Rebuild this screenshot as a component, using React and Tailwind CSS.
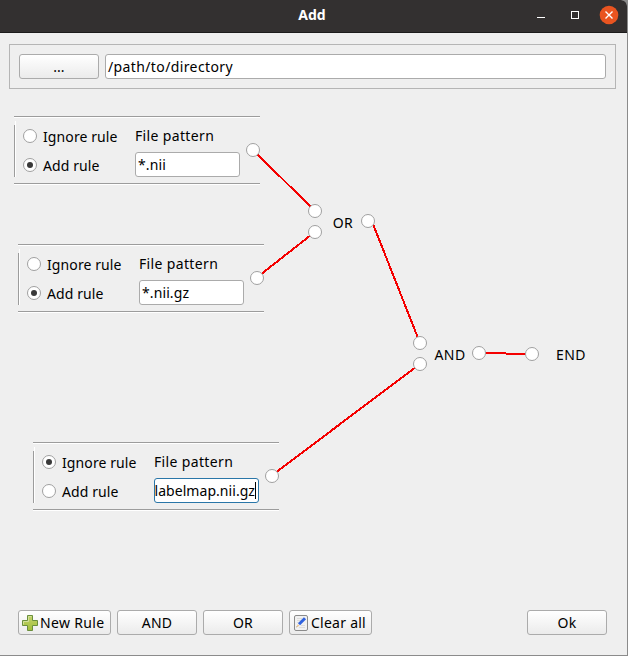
import React from "react";

const CANVAS_TOP = 100;

function Button({ className = "", children }) {
  return (
    <button
      className={`flex h-[25px] items-center rounded-[3px] border border-[#ababab] bg-linear-to-b from-white to-[#ebebeb] whitespace-nowrap ${className}`}
    >
      {children}
    </button>
  );
}

function Radio({ checked, label }) {
  return (
    <div className="flex h-[29px] shrink-0 items-center">
      <span className="flex size-[14px] items-center justify-center rounded-full border border-[#a0a0a0] bg-white">
        {checked && <span className="size-[6px] rounded-full bg-[#3a3a3a]" />}
      </span>
      <span className="ml-[6px] whitespace-nowrap pt-px tracking-[0.1px]">{label}</span>
    </div>
  );
}

function Rule({ x, y, ignore, pattern, focused }) {
  return (
    <div
      className="absolute flex h-[69px] w-[246px] flex-col"
      style={{ left: x, top: y - CANVAS_TOP }}
    >
      <div className="h-[2px] shrink-0 border-t border-[#9c9c9c] bg-white" />
      <div className="mt-[7px] flex h-[52px] shrink-0 border-l border-[#9c9c9c]">
        <div className="-mt-[4px] flex w-[120px] flex-col border-l border-white pl-[7px]">
          <Radio checked={ignore} label="Ignore rule" />
          <Radio checked={!ignore} label="Add rule" />
        </div>
        <div className="flex w-[105px] flex-col">
          <div className="h-[27px] whitespace-nowrap leading-[21px] tracking-[0.35px]">File pattern</div>
          <div
            className={`flex h-[25px] shrink-0 items-center rounded-[3px] border bg-white whitespace-nowrap ${
              focused ? "justify-end border-[#2a76a8] pr-[2px] tracking-[0.05px]" : "border-[#ababab] pl-[2px] tracking-[0.1px]"
            }`}
          >
            {pattern}
            {focused && <span className="h-[17px] w-px shrink-0 bg-black" />}
          </div>
        </div>
      </div>
      <div className="mt-[6px] h-[2px] shrink-0 border-t border-[#9c9c9c] bg-white" />
    </div>
  );
}

function Label({ x, y, children }) {
  return (
    <span
      className="absolute -translate-x-1/2 leading-[20px] tracking-[0.4px]"
      style={{ left: x, top: y - CANVAS_TOP }}
    >
      {children}
    </span>
  );
}

const wires = [
  [257, 154, 312, 208],
  [260, 275, 311, 235],
  [373, 224, 418, 338],
  [275, 473, 416, 367],
];

const ports = [
  [253, 150], [257, 278], [272, 476],
  [315, 211], [315, 232], [368, 221],
  [420, 343], [420, 364], [479, 353], [532, 354],
];

function Wires() {
  return (
    <svg className="absolute inset-0" width="627" height="500" viewBox="0 100 627 500">
      <g stroke="#f40000" strokeWidth="2" fill="none" shapeRendering="crispEdges">
        {wires.map(([x1, y1, x2, y2]) => (
          <line key={x1} x1={x1} y1={y1} x2={x2} y2={y2} />
        ))}
        <path d="M485 353H506M506 354H526" />
      </g>
      {ports.map(([x, y]) => (
        <circle key={`${x}-${y}`} cx={x} cy={y} r="6.5" fill="white" stroke="#a0a0a0" />
      ))}
    </svg>
  );
}

function PlusIcon() {
  return (
    <svg width="16" height="16" viewBox="0 0 16 16" className="shrink-0">
      <defs>
        <linearGradient id="plus" x1="0" y1="0" x2="0" y2="1">
          <stop offset="0" stopColor="#c3d36c" />
          <stop offset="1" stopColor="#a2bf3a" />
        </linearGradient>
      </defs>
      <path d="M5.5.5h5v5h5v5h-5v5h-5v-5h-5v-5h5z" fill="url(#plus)" stroke="#6a8f3c" strokeLinejoin="round" />
      <path d="M1.5 9.5v-3h5v-5h3" fill="none" stroke="#d3e09a" />
    </svg>
  );
}

function ClearIcon() {
  return (
    <svg width="14" height="16" viewBox="0 0 14 16" className="shrink-0">
      <rect x=".5" y=".5" width="13" height="15" rx="1.5" fill="#f1f1f1" stroke="#8b8b8b" />
      <path d="M3 3.5h5M3 5.5h4M3 7.5h2M7 10.5h4M5 12.5h6" stroke="#dcdcdc" />
      <path d="M5 9.3L11 3.3" stroke="#2f62df" strokeWidth="3" />
      <path d="M2.3 12.2l1.5-3 1.7 1.6z" fill="#f0c48a" />
      <path d="M2 12.5l1-1.2.4.5z" fill="#555" />
    </svg>
  );
}

export default function App() {
  return (
    <div className="h-[656px] w-[628px] overflow-hidden bg-[#8b8b8b] pr-px pb-px font-['Noto_Sans','Open_Sans',sans-serif] text-[14px] text-black">
      <div className="flex h-[655px] w-[627px] flex-col rounded-tr-[6px] bg-[#efefef]">
        <header className="flex h-[33px] shrink-0 items-center rounded-tr-[6px] border-b border-[#1c1b1b] bg-[#333030] pb-[3px] text-white">
          <div className="w-[120px]" />
          <h1 className="ml-[132px] w-[120px] text-center font-bold">Add</h1>
          <svg className="ml-[156px] -mb-[1px]" width="92" height="22" viewBox="528 3 92 22">
            <path d="M537 16.5h8" stroke="white" />
            <rect x="571.5" y="10.5" width="7" height="7" fill="none" stroke="white" />
            <circle cx="609" cy="14" r="9.3" fill="#e95420" />
            <path d="M605.5 10.5l7 7m0-7l-7 7" stroke="white" strokeWidth="1.4" />
          </svg>
        </header>
        <section className="mt-[11px] ml-[9px] flex h-[45px] w-[607px] shrink-0 items-center gap-[6px] border border-[#b5b5b5] pl-[9px]">
          <Button className="w-[80px] justify-center">...</Button>
          <div className="flex h-[25px] w-[501px] items-center rounded-[3px] border border-[#ababab] bg-white pl-[2px] tracking-[0.38px]">
            /path/to/directory
          </div>
        </section>
        <main className="relative mt-[11px] h-[500px] shrink-0">
          <Rule x={14} y={116} pattern="*.nii" />
          <Rule x={18} y={244} pattern="*.nii.gz" />
          <Rule x={33} y={442} ignore focused pattern="labelmap.nii.gz" />
          <Label x={343} y={213}>OR</Label>
          <Label x={450} y={345}>AND</Label>
          <Label x={571} y={345}>END</Label>
          <Wires />
        </main>
        <footer className="mt-[10px] flex h-[25px] shrink-0 items-center gap-[6px] pl-[18px]">
          <Button className="w-[93px] gap-[2px] pl-[3px] tracking-[0.35px]"><PlusIcon />New Rule</Button>
          <Button className="w-[80px] justify-center tracking-[0.3px]">AND</Button>
          <Button className="w-[80px] justify-center tracking-[0.3px]">OR</Button>
          <Button className="w-[83px] gap-[3px] pl-[4px] tracking-[0.25px]"><ClearIcon />Clear all</Button>
          <Button className="ml-[149px] w-[80px] justify-center tracking-[0.3px]">Ok</Button>
        </footer>
      </div>
    </div>
  );
}
